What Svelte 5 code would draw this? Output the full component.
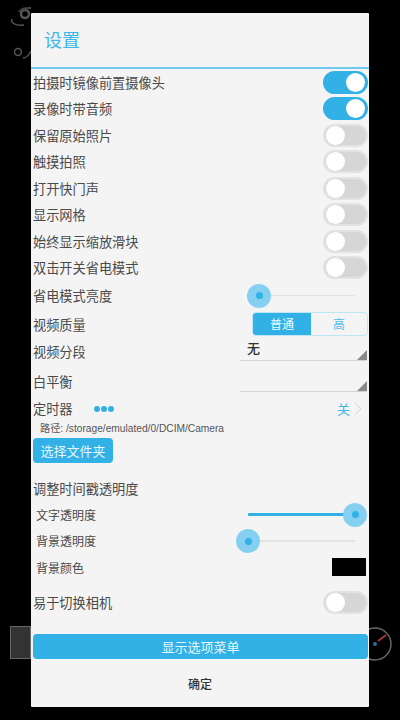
<script lang="ts">
	const topSwitches = [
		{ label: "拍摄时镜像前置摄像头", on: true },
		{ label: "录像时带音频", on: true },
		{ label: "保留原始照片", on: false },
		{ label: "触摸拍照", on: false },
		{ label: "打开快门声", on: false },
		{ label: "显示网格", on: false },
		{ label: "始终显示缩放滑块", on: false },
		{ label: "双击开关省电模式", on: false }
	];
</script>

<main class="screen">
	<!-- camera controls showing behind the dialog -->
	<svg class="behind behind--icons" width="31" height="70" viewBox="0 0 31 70" aria-hidden="true">
		<circle cx="25" cy="14" r="4" fill="none" stroke="#555" stroke-width="2.5" />
		<path d="M19 12c2-3 4-4 12-4" fill="none" stroke="#444" stroke-width="2" />
		<path d="M12 19c-2 4 4 7 12 6" fill="none" stroke="#555" stroke-width="1.5" />
		<circle cx="18" cy="52" r="3.5" fill="none" stroke="#555" stroke-width="1.5" />
		<path d="M23 58c4 0 6-3 8-7" fill="none" stroke="#555" stroke-width="1.5" />
	</svg>
	<div class="behind behind--shutter"></div>
	<svg class="behind behind--dial" width="31" height="36" viewBox="0 0 31 36" aria-hidden="true">
		<circle cx="6" cy="18" r="16" fill="none" stroke="#666" stroke-width="1.5" />
		<path d="M9 15 17 9" stroke="#a8323a" stroke-width="2" />
		<circle cx="6" cy="18" r="2" fill="#2f6f90" />
	</svg>

	<section class="dialog">
		<h1>设置</h1>

		<div class="body">
			<div class="switches">
				{#each topSwitches as item}
					<div class="row">
						<span>{item.label}</span>
						<div class="switch" class:on={item.on}><i></i></div>
					</div>
				{/each}
			</div>

			<div class="row row--slider">
				<span>省电模式亮度</span>
				<div class="slider slider--main">
					<div class="fill" style="width: 12px"></div>
					<div class="knob" style="left: 12px"></div>
				</div>
			</div>

			<div class="row row--quality">
				<span>视频质量</span>
				<div class="segmented">
					<b>普通</b>
					<em>高</em>
				</div>
			</div>

			<div class="row row--spinner">
				<span>视频分段</span>
				<div class="spinner"><strong>无</strong></div>
			</div>

			<div class="row row--spinner row--white">
				<span>白平衡</span>
				<div class="spinner"></div>
			</div>

			<div class="row row--timer">
				<span>定时器</span>
				<div class="dots"><i></i><i></i><i></i></div>
				<div class="timer-value">
					关
					<svg width="9" height="14" viewBox="0 0 9 14" aria-hidden="true">
						<path d="M1 1l6 6-6 6" fill="none" stroke="#d4d4d4" stroke-width="1" />
					</svg>
				</div>
			</div>

			<p class="path">路径: /storage/emulated/0/DCIM/Camera</p>
			<button class="folder">选择文件夹</button>

			<h2>调整时间戳透明度</h2>

			<div class="row row--sub">
				<span>文字透明度</span>
				<div class="slider slider--sub">
					<div class="fill" style="width: 107px"></div>
					<div class="knob" style="left: 107px"></div>
				</div>
			</div>

			<div class="row row--sub">
				<span>背景透明度</span>
				<div class="slider slider--sub">
					<div class="knob" style="left: 0"></div>
				</div>
			</div>

			<div class="row row--sub">
				<span>背景颜色</span>
				<div class="swatch"></div>
			</div>

			<div class="row row--easy">
				<span>易于切换相机</span>
				<div class="switch"><i></i></div>
			</div>

			<button class="menu">显示选项菜单</button>
		</div>

		<div class="ok">确定</div>
	</section>
</main>

<style>
	:global(body) {
		margin: 0;
		background: #000;
		font-family: "Noto Sans CJK SC", "Liberation Sans", sans-serif;
	}

	.screen {
		position: relative;
		width: 400px;
		height: 720px;
		padding-top: 13px;
		box-sizing: border-box;
		background: #000;
		overflow: hidden;
	}

	.behind {
		position: absolute;
	}

	.behind--icons {
		left: 0;
		top: 0;
	}

	.behind--shutter {
		left: 10px;
		top: 626px;
		width: 21px;
		height: 33px;
		box-sizing: border-box;
		background: #333;
		border: 1px solid #666;
	}

	.behind--dial {
		left: 369px;
		top: 626px;
	}

	.dialog {
		position: relative;
		width: 338px;
		height: 694px;
		margin-left: 31px;
		background: #f4f4f4;
		border-radius: 1px;
		display: flex;
		flex-direction: column;
		color: #4a4a4a;
		font-size: 13.2px;
	}

	h1 {
		margin: 0;
		height: 56px;
		box-sizing: border-box;
		padding: 12px 0 0 13px;
		font-size: 18px;
		line-height: 28px;
		font-weight: 400;
		color: #3db7e8;
		border-bottom: 2px solid #6fcbee;
	}

	.body {
		padding: 0 1px 0 2px;
		display: flex;
		flex-direction: column;
	}

	.row {
		height: 26.5px;
		display: flex;
		align-items: center;
		justify-content: space-between;
	}

	.switch {
		width: 45px;
		height: 23px;
		box-sizing: border-box;
		border-radius: 12px;
		background: #d6d6d6;
		border: 2px solid #e2e2e2;
		position: relative;
	}

	.switch i {
		position: absolute;
		left: 1px;
		top: 0;
		width: 19px;
		height: 19px;
		border-radius: 50%;
		background: #fff;
	}

	.switch.on {
		background: #31b1e6;
		border-color: #31b1e6;
	}

	.switch.on i {
		left: 21px;
	}

	.row--slider {
		height: 29px;
	}

	.slider {
		position: relative;
		height: 1.5px;
		background: #e2e2e2;
		margin-right: 13px;
	}

	.slider--main {
		width: 108px;
	}

	.slider--sub {
		width: 107px;
	}

	.fill {
		position: absolute;
		left: 0;
		top: -0.5px;
		height: 3px;
		border-radius: 1px;
		background: #31b1e6;
	}

	.knob {
		position: absolute;
		top: -11px;
		width: 24px;
		height: 24px;
		margin-left: -12px;
		border-radius: 50%;
		background: #85d0f0;
	}

	.knob::after {
		content: "";
		position: absolute;
		left: 8.5px;
		top: 8.5px;
		width: 7px;
		height: 7px;
		border-radius: 50%;
		background: #31b1e6;
	}

	.row--quality {
		height: 28px;
	}

	.segmented {
		width: 116px;
		height: 24px;
		box-sizing: border-box;
		display: flex;
		border: 1px solid #bfe6f6;
		border-radius: 4px;
		overflow: hidden;
		font-size: 12px;
		line-height: 22px;
		text-align: center;
	}

	.segmented b {
		flex: 0 0 58px;
		font-weight: 400;
		color: #eef9fd;
		background: #31b1e6;
	}

	.segmented em {
		flex: 1;
		font-style: normal;
		color: #4fbdea;
	}

	.row--spinner {
		height: 28px;
		align-items: flex-start;
		padding-top: 4px;
		box-sizing: border-box;
	}

	.row--white {
		height: 30px;
		padding-top: 6px;
	}

	.spinner {
		position: relative;
		width: 127px;
		height: 23px;
		box-sizing: border-box;
		border-bottom: 1.5px solid #d4d4d4;
		margin-top: -4px;
		margin-right: 1px;
		padding-left: 7px;
		font-size: 13px;
		line-height: 20px;
		color: #333;
	}

	.row--white .spinner {
		height: 26px;
		margin-top: -6px;
	}

	.spinner strong {
		font-weight: 500;
	}

	.spinner::after {
		content: "";
		position: absolute;
		right: 0;
		bottom: 0;
		width: 0;
		height: 0;
		border-left: 10px solid transparent;
		border-bottom: 10px solid #8a8a8a;
	}

	.row--timer {
		height: 25px;
		justify-content: flex-start;
	}

	.dots {
		display: flex;
		gap: 1px;
		margin-left: 21px;
	}

	.dots i {
		width: 6px;
		height: 6px;
		border-radius: 50%;
		background: #31b1e6;
	}

	.timer-value {
		margin-left: auto;
		margin-right: 5px;
		display: flex;
		align-items: center;
		gap: 4px;
		font-size: 13px;
		color: #3db7e8;
	}

	.path {
		margin: 0;
		padding-left: 7px;
		height: 16px;
		font-size: 10.2px;
		line-height: 16px;
		color: #555;
		font-family: "Liberation Sans", "Noto Sans CJK SC", sans-serif;
	}

	button {
		border: 0;
		padding: 0;
		font-family: inherit;
		background: #31b1e6;
		color: #e6f6fc;
		border-radius: 4px;
		font-size: 13px;
		display: block;
	}

	.folder {
		width: 80px;
		height: 25px;
		margin-top: 1px;
	}

	h2 {
		margin: 16px 0 2px;
		height: 20px;
		font-size: 13.2px;
		line-height: 20px;
		font-weight: 400;
	}

	.row--sub {
		padding-left: 3px;
		font-size: 12px;
	}

	.swatch {
		width: 34px;
		height: 18px;
		background: #000;
		margin-right: 2px;
	}

	.row--easy {
		height: 26px;
		margin-top: 9px;
	}

	.menu {
		width: 335px;
		height: 25px;
		margin-top: 18px;
	}

	.ok {
		margin-top: 14px;
		text-align: center;
		font-size: 12px;
		line-height: 22px;
		color: #333;
		font-weight: 500;
	}
</style>
